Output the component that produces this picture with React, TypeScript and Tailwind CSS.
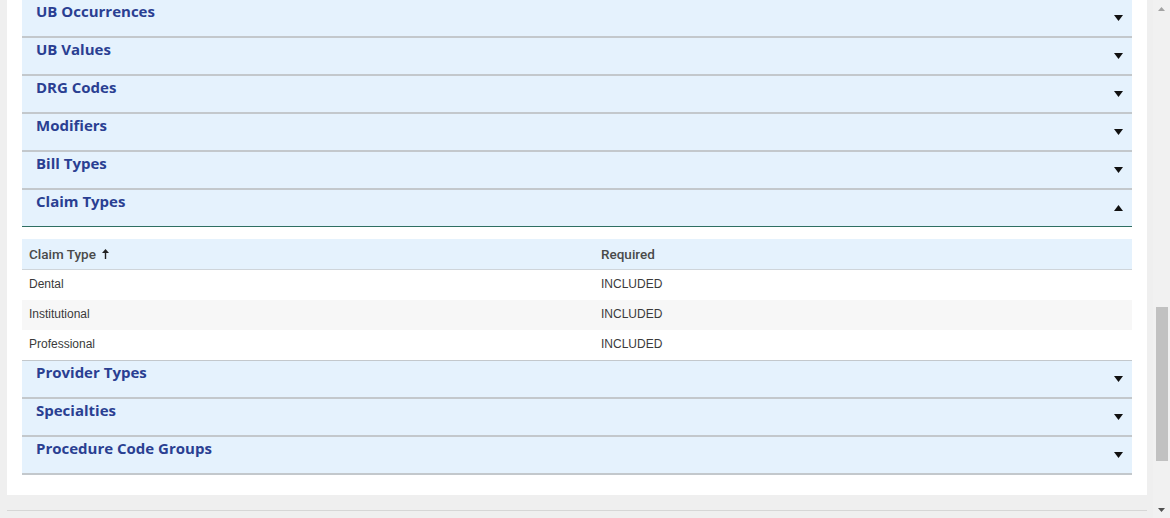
const before = ['UB Occurrences', 'UB Values', 'DRG Codes', 'Modifiers', 'Bill Types'];
const after = ['Provider Types', 'Specialties', 'Procedure Code Groups'];
const rows = ['Dental', 'Institutional', 'Professional'];

function Caret({ up }: { up?: boolean }) {
  return (
    <svg width="9" height="6" viewBox="0 0 9 6" className={up ? 'rotate-180' : ''}>
      <path d="M0 0 L9 0 L4.5 6 Z" fill="#111" />
    </svg>
  );
}

function Header({ title, open, topLine }: { title: string; open?: boolean; topLine?: boolean }) {
  return (
    <div
      className={`flex items-start justify-between bg-[#e5f2fd] pl-[14px] pr-[9px] ${
        open ? 'h-[37px] border-b border-[#2f6f63]' : 'border-b-2 border-[#c3c8cc]'
      } ${topLine ? 'h-[39px] border-t border-t-[#c3c8cc]' : ''} ${!open && !topLine ? 'h-[38px]' : ''}`}
    >
      <span
        className="text-[15px] font-bold leading-[22px] text-[#2a3f92]"
        style={{ fontFamily: '"Open Sans", sans-serif' }}
      >
        {title}
      </span>
      <span className="pt-[15px]">
        <Caret up={open} />
      </span>
    </div>
  );
}

export default function App() {
  return (
    <div className="flex h-[518px] w-[1170px] overflow-hidden bg-[#efefef]">
      <div className="flex flex-1 flex-col pl-[7px] pr-[6px]">
        <div className="flex flex-col bg-white px-[15px] pb-[20px]">
          {before.map((t) => (
            <Header key={t} title={t} />
          ))}
          <Header title="Claim Types" open />
          <div className="mt-[12px]">
            <div
              className="grid h-[31px] grid-cols-[573px_1fr] items-center border-b border-[#cfd5da] bg-[#e5f2fd] text-[13.5px] font-medium text-[#4a4a4a]"
              style={{ fontFamily: 'Roboto, sans-serif' }}
            >
              <div className="flex items-center gap-[6px] pl-[7px]">
                Claim Type
                <svg width="7" height="10" viewBox="0 0 7 10">
                  <path d="M3.5 0 L7 4 L4.2 4 L4.2 10 L2.8 10 L2.8 4 L0 4 Z" fill="#222" />
                </svg>
              </div>
              <div className="pl-[6px]">Required</div>
            </div>
            {rows.map((r, i) => (
              <div
                key={r}
                className={`grid h-[30px] grid-cols-[573px_1fr] items-center pb-[2px] text-[12px] text-[#3a3a3a] ${
                  i === 1 ? 'bg-[#f7f7f7]' : 'bg-white'
                }`}
                style={{ fontFamily: '"Liberation Sans", Arial, sans-serif' }}
              >
                <div className="pl-[7px]">{r}</div>
                <div className="pl-[6px]">INCLUDED</div>
              </div>
            ))}
          </div>
          {after.map((t, i) => (
            <Header key={t} title={t} topLine={i === 0} />
          ))}
        </div>
        <div className="mt-[15px] border-t border-[#d6d6d6]" />
      </div>
      <div className="flex w-[17px] flex-col items-center bg-[#f1f1f1]">
        <div className="flex h-[17px] items-center">
          <svg width="7" height="4" viewBox="0 0 7 4"><path d="M0 4 L7 4 L3.5 0 Z" fill="#a3a3a3" /></svg>
        </div>
        <div className="mt-[290px] h-[154px] w-[12px] bg-[#c1c1c1]" />
        <div className="mt-auto flex h-[17px] items-center">
          <svg width="7" height="4" viewBox="0 0 7 4"><path d="M0 0 L7 0 L3.5 4 Z" fill="#505050" /></svg>
        </div>
      </div>
    </div>
  );
}
